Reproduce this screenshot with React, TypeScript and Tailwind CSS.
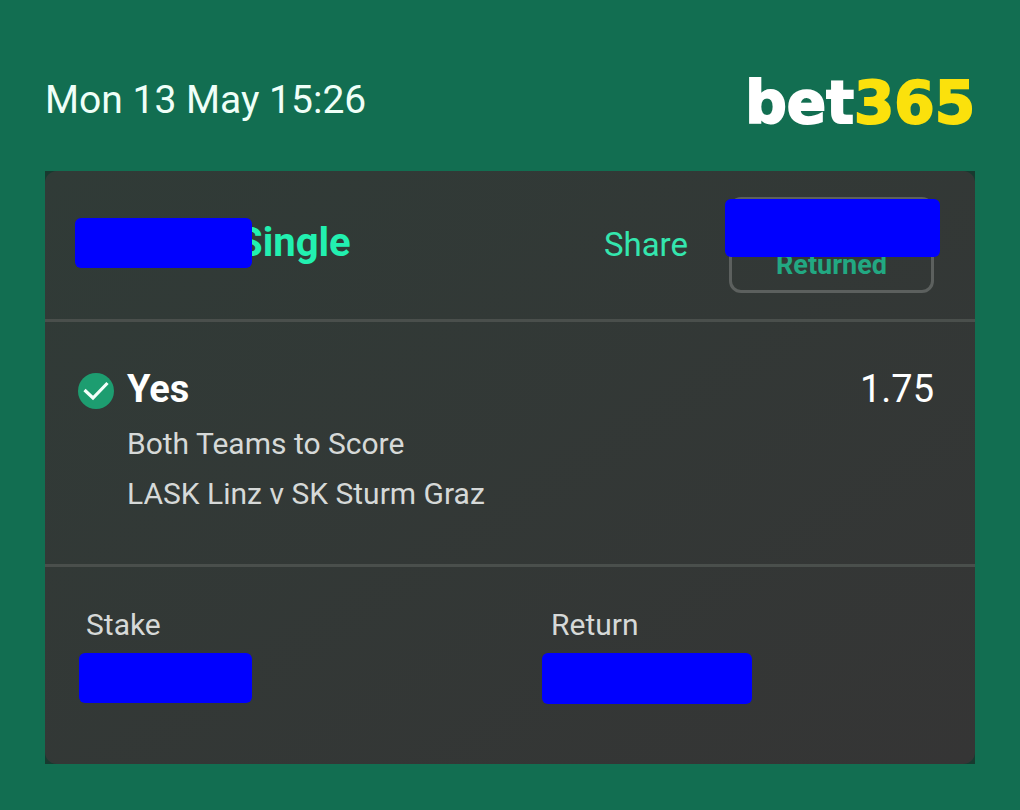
interface Selection {
  pick: string;
  market: string;
  fixture: string;
  odds: string;
}

const selection: Selection = {
  pick: "Yes",
  market: "Both Teams to Score",
  fixture: "LASK Linz v SK Sturm Graz",
  odds: "1.75",
};

function Logo() {
  return (
    <div className="font-['DejaVu_Sans',sans-serif] text-[58px] leading-[58px] font-bold text-white [-webkit-text-stroke:2px_currentColor]">
      bet<span className="text-[#fbe10c]">365</span>
    </div>
  );
}

function WonIcon() {
  return (
    <svg viewBox="0 0 36 36" className="size-9 shrink-0" aria-hidden="true">
      <circle cx="18" cy="18" r="18" fill="#1d9d70" />
      <path d="M6.5 17 L15 25 L29.5 10" fill="none" stroke="#f4fffb" strokeWidth="3.2" />
    </svg>
  );
}

export default function App() {
  return (
    <div className="min-h-screen bg-[#126e51] px-[45px] pt-[68px] pb-[46px] font-[Roboto,sans-serif]">
      <header className="flex items-end justify-between pb-[39px]">
        <time className="text-[39px] leading-[64px] text-[#effff8]">Mon 13 May 15:26</time>
        <Logo />
      </header>

      <main className="bg-[#18392f]">
        <div className="rounded-xl bg-linear-to-br from-[#303b37] to-[#353535]">
          {/* Bet type and cash out */}
          <section className="flex items-center border-b-3 border-[#4a4f4c] py-[26px] pr-[41px] pl-[30px]">
            <div className="flex items-center pb-1">
              <span className="z-10 h-[50px] w-[177px] rounded-md bg-[#0000ff]" />
              <h1 className="-ml-3.5 text-[40px] leading-[48px] font-bold text-[#22f0b0]">Single</h1>
            </div>
            <button className="ml-auto text-[33px] leading-[40px] text-[#34e6ae]">Share</button>
            <button className="relative ml-[41px] flex h-24 w-[205px] items-end justify-center rounded-xl border-3 border-[#5c605e] pb-[9px] text-[27px] leading-[32px] font-bold text-[#22a882]">
              Returned
              <span className="absolute -top-px -right-[9px] -left-[7px] h-[58px] rounded-md bg-[#0000ff]" />
            </button>
          </section>

          {/* Selection */}
          <section className="flex items-start gap-[13px] border-b-3 border-[#4a4f4c] pt-[42px] pr-[41px] pb-[45px] pl-[33px]">
            <div className="flex h-[54px] items-center">
              <WonIcon />
            </div>
            <div className="flex-1 text-[30px] leading-[50px] text-[#d6d9d8]">
              <h2 className="mb-[5px] text-[38px] font-bold text-white">{selection.pick}</h2>
              <p>{selection.market}</p>
              <p>{selection.fixture}</p>
            </div>
            <div className="text-[38px] leading-[50px] text-white">{selection.odds}</div>
          </section>

          {/* Totals */}
          <section className="grid grid-cols-2 pt-[38px] pb-[60px] text-[30px] leading-[40px] text-[#d6d9d8]">
            <div className="flex flex-col gap-2 pl-[34px]">
              <span className="pl-[7px]">Stake</span>
              <span className="h-[50px] w-[173px] rounded-md bg-[#0000ff]" />
            </div>
            <div className="flex flex-col gap-2 pl-8">
              <span className="pl-[9px]">Return</span>
              <span className="h-[51px] w-[210px] rounded-md bg-[#0000ff]" />
            </div>
          </section>
        </div>
      </main>
    </div>
  );
}
